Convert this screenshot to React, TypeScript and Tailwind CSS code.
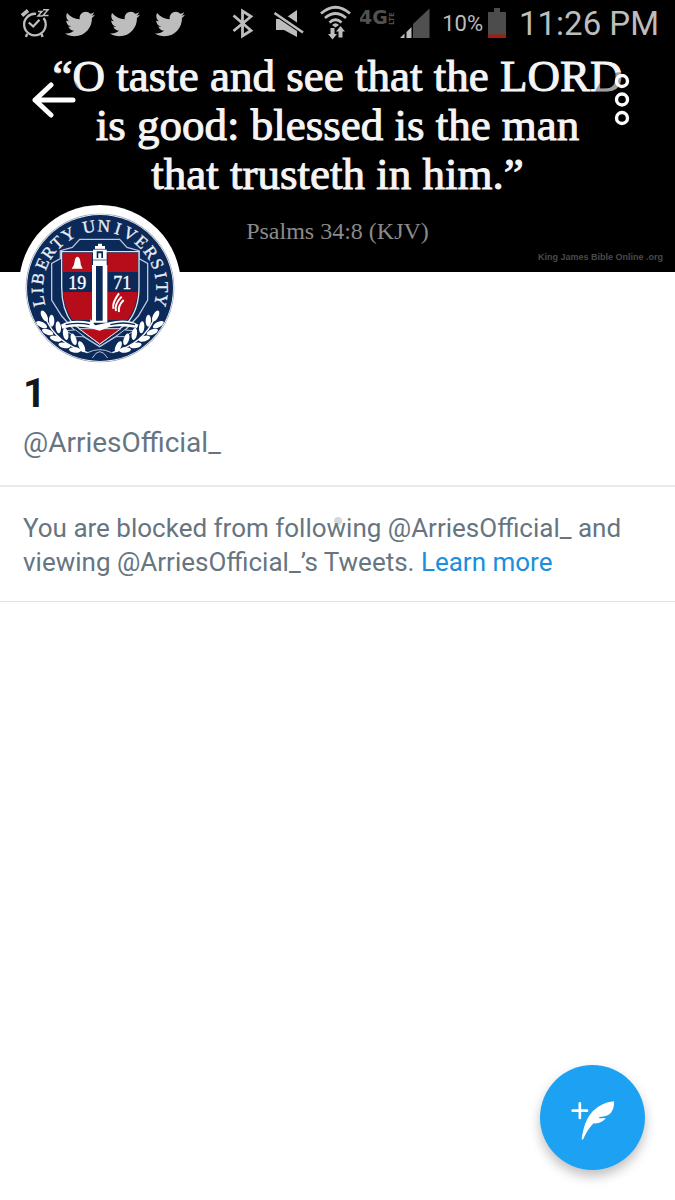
import { FaTwitter } from 'react-icons/fa'

const sealLetters = [
  ['L', -102], ['I', -92], ['B', -81], ['E', -67], ['R', -55], ['T', -43], ['Y', -30],
  ['U', -10], ['N', 4], ['I', 17], ['V', 29], ['E', 42], ['R', 55], ['S', 67],
  ['I', 78], ['T', 89], ['Y', 101],
]

const leaves = [
  [102, 348, 62], [124, 362, 88], [94, 374, 28], [144, 382, 84], [112, 396, 22],
  [166, 402, 80], [136, 416, 16], [190, 418, 72], [162, 436, 10], [214, 440, 64], [194, 450, 4],
]

const Laurel = () => (
  <g fill="#fff">
    {leaves.map(([x, y, angle]) => (
      <ellipse key={`${x}-${y}`} cx={x} cy={y} rx="18" ry="8" transform={`rotate(${angle} ${x} ${y})`} />
    ))}
    <path d="M105 352Q135 430 232 458" fill="none" stroke="#fff" strokeWidth="4" />
  </g>
)

const Seal = () => (
  <svg viewBox="26 15 486 486" className="w-full h-full" role="img" aria-label="Liberty University seal">
    <circle cx="269" cy="264" r="223" fill="#8f9bb0" />
    <circle cx="269" cy="264" r="221" fill="#fff" />
    <circle cx="269" cy="264" r="219" fill="#0b2a59" />
    <g fill="#e8edf5" stroke="#e8edf5" fontFamily="Liberation Serif, serif" fontSize="52" textAnchor="middle">
      {sealLetters.map(([letter, angle]) => (
        <text key={angle} x="268" y="95" transform={`rotate(${angle} 268 265)`}>{letter}</text>
      ))}
    </g>
    <path d="M208 118H328L350 142 386 152V176L412 190V300L384 348 340 395 268 440 196 395 154 348 124 300V190L150 176V152L186 142Z" fill="#0b2a59" stroke="#b9c5d8" strokeWidth="4" />
    <path d="M154 155H386V262Q386 330 350 370L268 432 186 370Q154 330 154 262Z" fill="#0b2a59" stroke="#dbe2ec" strokeWidth="4" />
    <path d="M157 158H245V216H157ZM292 158H383V216H292ZM158 276H245V360H186Q162 325 158 276ZM292 276H382Q378 325 352 360H292Z" fill="#b70d1b" />
    <path d="M206 386H332L268 432Z" fill="#b70d1b" stroke="#dbe2ec" strokeWidth="3" />
    <path d="M184 206Q192 198 193 184Q194 172 201 170Q209 172 210 184Q210 198 217 206Z" fill="#fff" />
    <path d="M309 326Q305 308 326 280M317 333Q311 314 334 290M326 336Q322 318 340 300" fill="none" stroke="#fff" strokeWidth="6" />
    <g fill="#fff" stroke="#fff" fontFamily="Liberation Serif, serif" fontSize="54" textAnchor="middle">
      <text x="201" y="266">19</text>
      <text x="336" y="266">71</text>
    </g>
    <path d="M245 195H291V368H245Z" fill="#fff" />
    <path d="M257 198H277V362H257Z" fill="#0b2a59" />
    <path d="M248 148H289V196H248ZM254 138H284V148H254ZM263 131H275V138H263Z" fill="#fff" />
    <path d="M259 174V154H278V174Z" fill="#0b2a59" />
    <path d="M264 174V160H273V174Z" fill="#fff" />
    <path d="M248 148H289M248 180H289" stroke="#0b2a59" strokeWidth="2" />
    <path d="M152 374Q180 356 240 366L256 376 300 366Q350 354 384 374L380 384Q330 374 296 382L268 392 240 384Q195 374 156 386Z" fill="#fff" />
    <path d="M166 374Q205 366 238 374M300 374Q340 364 374 374" stroke="#0b2a59" strokeWidth="4" fill="none" />
    <path d="M240 358L250 366V384H238Z" fill="#fff" />
    <path d="M166 392L196 390 222 410H196ZM372 392L342 390 316 410H342Z" fill="#0b2a59" stroke="#b9c5d8" strokeWidth="3" />
    <Laurel />
    <g transform="translate(538 0) scale(-1 1)">
      <Laurel />
    </g>
    <path d="M246 474Q268 436 292 474M232 458Q268 440 304 458" fill="none" stroke="#b9c5d8" strokeWidth="3" />
  </svg>
)

const AlarmIcon = () => (
  <svg viewBox="21 0 29 48" className="w-[29px] h-12" aria-hidden="true">
    <path d="M36 13.8A10.8 10.8 0 1 0 43.5 18" fill="none" stroke="currentColor" strokeWidth="2.3" />
    <path d="M28.8 22.5L33.2 26.5 39.5 19.8" fill="none" stroke="currentColor" strokeWidth="2.3" />
    <path d="M22 15.5L28 10.5" fill="none" stroke="currentColor" strokeWidth="3.6" />
    <path d="M27 33.8L26 37M41.5 33.8L42.5 37" fill="none" stroke="currentColor" strokeWidth="2.4" />
    <path d="M38 11.5H42L38 16H42.5M43 9.8H48L43 15.5H48.5" fill="none" stroke="currentColor" strokeWidth="1.5" />
  </svg>
)

const BluetoothIcon = () => (
  <svg viewBox="233 0 22 48" className="w-[22px] h-12" aria-hidden="true">
    <path d="M234.5 15.5L252 30.5 243.5 36V11L252 16.5 234.5 31" fill="none" stroke="currentColor" strokeWidth="2.8" />
  </svg>
)

const MutedIcon = () => (
  <svg viewBox="274 0 30 48" className="w-[30px] h-12" aria-hidden="true">
    <path d="M276 19H284L297 10V37L284 30H276Z" fill="currentColor" />
    <path d="M275 12L304 31.5" stroke="#000" strokeWidth="7" />
    <path d="M274.5 13L303 32.5" stroke="currentColor" strokeWidth="2.6" />
  </svg>
)

const WifiIcon = () => (
  <svg viewBox="320 0 31 48" className="w-[31px] h-12" aria-hidden="true">
    <path d="M321 13.5Q335.5 1 350 13.5M325 18Q335.5 9 346 18M329.500 22.5Q335.5 17 341.5 22.5" fill="none" stroke="currentColor" strokeWidth="2.8" />
    <path d="M332 25Q335.5 21.5 339 25L335.5 27.5Z" fill="currentColor" />
    <path d="M330.5 28H334.5V34H337L332.5 39.5 328 34H330.5ZM338.5 37.5H342.5V31.5H345L340.5 26 336 31.5H338.5Z" fill="currentColor" />
  </svg>
)

const NetworkIcon = () => (
  <svg viewBox="360 0 35 48" className="w-[35px] h-12 text-[#505050]" role="img" aria-label="4G LTE">
    <g fill="currentColor" fontFamily="DejaVu Sans, sans-serif">
      <text x="359" y="24" fontSize="19" fontWeight="bold">4G</text>
      <text x="394" y="25" fontSize="7" fontWeight="bold" transform="rotate(-90 394 25)">LTE</text>
    </g>
  </svg>
)

const SignalIcon = () => (
  <svg viewBox="400 0 30 48" className="w-[30px] h-12" aria-hidden="true">
    <path d="M413 24L429.5 8.5V38H413Z" fill="#505050" />
    <path d="M400 38L404.5 33.5V38ZM406.5 32L411.5 27V38H406.5Z" fill="currentColor" />
  </svg>
)

const BatteryIcon = () => (
  <svg viewBox="487 0 20 48" className="w-5 h-12" aria-hidden="true">
    <path d="M488 12H494V8H500V12H506V35H488Z" fill="#4c4c4c" />
    <path d="M488 34.5H506V38H488Z" fill="#a51c0c" />
  </svg>
)

const StatusBar = () => (
  <div className="flex items-center justify-between h-12 pl-[21px] pr-4 text-[#bdbdbd]">
    <div className="flex items-center">
      <AlarmIcon />
      <div className="flex gap-[15px] ml-[15px]">
        <FaTwitter size={30} />
        <FaTwitter size={30} />
        <FaTwitter size={30} />
      </div>
    </div>
    <div className="flex items-center">
      <BluetoothIcon />
      <div className="flex items-center gap-4 ml-5">
        <MutedIcon />
        <WifiIcon />
      </div>
      <div className="flex items-center gap-[5px] ml-[9px]">
        <NetworkIcon />
        <SignalIcon />
      </div>
      <span className="ml-3 mr-1 text-[22px] leading-6">10%</span>
      <BatteryIcon />
      <span className="ml-3 text-[33px] leading-9">11:26 PM</span>
    </div>
  </div>
)

const Banner = () => (
  <div className="relative h-56 text-center">
    <blockquote className="pt-1 font-['Liberation_Serif',serif] text-[45px] leading-[49px] text-[#f5f5f5] [-webkit-text-stroke:1px_#f5f5f5]">
      <p>“O taste and see that the LORD</p>
      <p>is good: blessed is the man</p>
      <p>that trusteth in him.”</p>
    </blockquote>
    <p className="mt-4 font-['Liberation_Serif',serif] text-[24px] leading-8 text-[#8a8a8a]">Psalms 34:8 (KJV)</p>
    <p className="pr-3 text-right font-['Liberation_Sans',sans-serif] font-bold text-[9px] leading-5 text-[#4a4a4a]">King James Bible Online .org</p>
    <button type="button" aria-label="Back" className="absolute top-6 left-[26px] flex items-center justify-center rounded-full size-14 bg-black/35">
      <svg viewBox="0 0 44 36" className="w-11 h-9" fill="none" stroke="#fff" strokeWidth="5" strokeLinecap="round" strokeLinejoin="round" aria-hidden="true">
        <path d="M19 3L3 18 19 33M3 18H41" />
      </svg>
    </button>
    <button type="button" aria-label="More options" className="absolute top-6 right-[25px] flex items-center justify-center rounded-full size-14 bg-black/35">
      <svg viewBox="0 0 16 52" className="w-4 h-[52px]" fill="none" stroke="#fff" strokeWidth="3.4" aria-hidden="true">
        <circle cx="8" cy="7" r="5.5" />
        <circle cx="8" cy="25.5" r="5.5" />
        <circle cx="8" cy="44" r="5.5" />
      </svg>
    </button>
  </div>
)

const App = () => {
  return (
    <div className="min-h-screen bg-white font-[Roboto,sans-serif]">
      <header className="bg-black">
        <StatusBar />
        <Banner />
      </header>

      <main className="text-[#66757f]">
        <section className="px-[23px] pb-6 border-b-2 border-[#e8ebed]">
          <div className="relative -mt-[67px] -ml-1 overflow-hidden bg-white rounded-full size-[162px]">
            <Seal />
          </div>
          <h1 className="mt-1 text-[40px] leading-[46px] font-bold text-[#14171a]">1</h1>
          <p className="mt-2 text-[28px] leading-9">@ArriesOfficial_</p>
        </section>

        <section className="relative px-[23px] pt-6 pb-[22px] border-b border-[#dfe3e6]">
          <span className="absolute rounded-full top-[30px] left-1/2 size-2 -translate-x-1/2 bg-[#d3dade]" />
          <p className="relative text-[26px] leading-[34px]">
            You are blocked from following @ArriesOfficial_ and viewing @ArriesOfficial_’s Tweets.{' '}
            <a href="#" className="text-[#1b8fdc]">Learn more</a>
          </p>
        </section>
      </main>

      <button type="button" aria-label="New Tweet" className="fixed flex items-center justify-center rounded-full shadow-[0_6px_12px_rgba(0,0,0,0.25)] right-[30px] bottom-[30px] size-[105px] bg-[#1da1f2]">
        <svg viewBox="45 44 315 315" className="w-full h-full" fill="#fff" aria-hidden="true">
          <path d="M143 181H186M164.5 159V203" stroke="#fff" strokeWidth="8" strokeLinecap="round" />
          <path d="M267 153Q228 157 203 183Q184 204 176 235Q171 254 170 266Q173 271 176 264Q188 236 206 219Q222 221 232 213Q240 208 242 202Q232 205 221 203L224 200Q248 198 258 187Q268 174 267 153Z" />
        </svg>
      </button>
    </div>
  )
}

export default App
